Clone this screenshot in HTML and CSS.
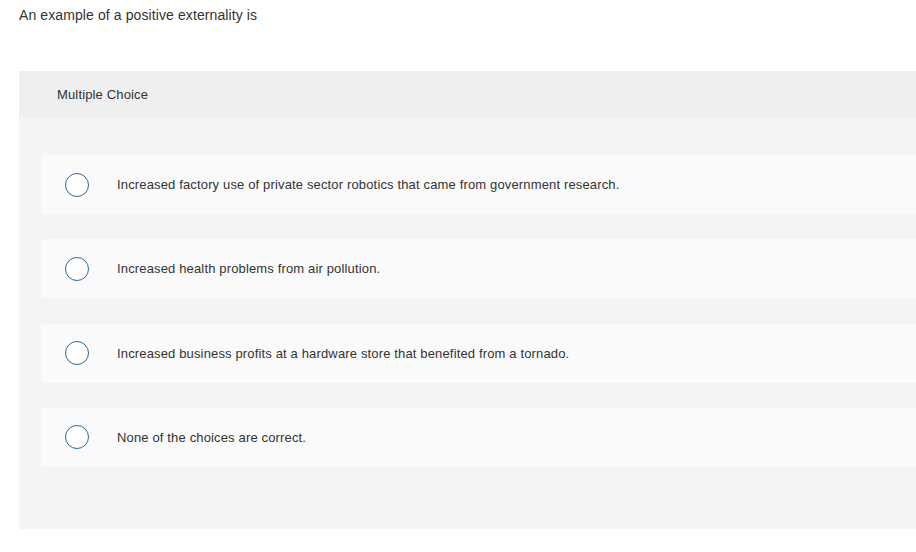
FILE: index.html
```html
<!DOCTYPE html>
<html>
<head>
<meta charset="utf-8">
<link rel="stylesheet" href="styles.css">
</head>
<body>
<div class="page">
  <p class="question">An example of a positive externality is</p>
  <div class="panel">
    <div class="panel-head">Multiple Choice</div>
    <div class="panel-body">
      <div class="choice"><span class="radio"></span><span class="label">Increased factory use of private sector robotics that came from government research.</span></div>
      <div class="choice"><span class="radio"></span><span class="label">Increased health problems from air pollution.</span></div>
      <div class="choice"><span class="radio"></span><span class="label">Increased business profits at a hardware store that benefited from a tornado.</span></div>
      <div class="choice"><span class="radio"></span><span class="label">None of the choices are correct.</span></div>
    </div>
  </div>
</div>
</body>
</html>
```
FILE: styles.css
```css
html, body {
  margin: 0;
  padding: 0;
  overflow: hidden;
  background: #ffffff;
}
body {
  font-family: "Liberation Sans", Arial, sans-serif;
  color: #333333;
  font-size: 13px;
  letter-spacing: 0.15px;
}
.page {
  padding: 6px 0 0 19px;
  width: 920px;
}
.question {
  margin: 0;
  line-height: 19px;
  font-size: 14px;
  letter-spacing: 0.1px;
  color: #333;
}
.panel {
  margin-top: 46px;
  width: 910px;
  border-radius: 0 0 0 3px;
  overflow: hidden;
}
.panel-head {
  background: #efefef;
  height: 46px;
  display: flex;
  align-items: center;
  padding-left: 38px;
  font-size: 13px;
  color: #333;
}
.panel-body {
  background: #f4f4f4;
  padding: 38px 0 62px 22px;
  display: flex;
  flex-direction: column;
  gap: 25.3px;
}
.choice {
  background: #fafafa;
  height: 59px;
  border-radius: 3px 0 0 3px;
  display: flex;
  align-items: center;
  padding-left: 24px;
}
.radio {
  width: 22px;
  height: 22px;
  border: 1.5px solid #2d6496;
  border-radius: 50%;
  background: #fff;
  flex: none;
}
.label {
  margin-left: 28px;
  font-size: 13px;
  color: #333;
}
```
